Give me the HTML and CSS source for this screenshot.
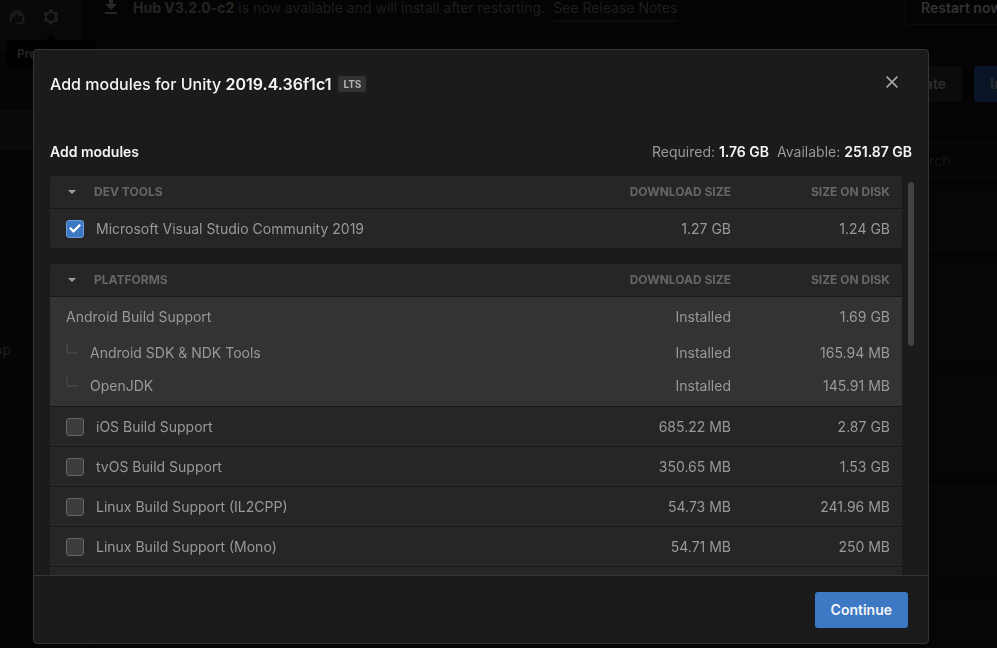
FILE: index.html
```html
<!DOCTYPE html>
<html lang="en">
<head>
<meta charset="utf-8">
<meta name="viewport" content="width=device-width, initial-scale=1">
<title>Unity Hub</title>
<link rel="stylesheet" href="styles.css">
</head>
<body>
<div class="app">
  <aside class="sidebar">
    <div class="sidebar-top">
      <button class="icon-button" type="button" aria-label="Support">
        <svg width="18" height="18" viewBox="0 0 24 24" fill="currentColor"><path d="M21 12.2C21 6.7 16.700 3 12 3S3 6.600 3 12.300C2.400 12.600 2 13.300 2 14v2c0 1.100.9 2 2 2h1v-6c0-3.900 3.100-7 7-7s7 3.100 7 7v7h-8v2h8c1.100 0 2-.9 2-2v-1.200c.6-.3 1-.9 1-1.600v-2.300c0-.8-.4-1.400-1-1.700z"/><circle cx="9" cy="13" r="1"/><circle cx="15" cy="13" r="1"/><path d="M18 11c-.5-2.900-3-5-6-5-3 0-6.200 2.500-6 6.500 2.500-1 4.300-3.200 4.900-5.800C12.200 9.300 14.900 11 18 11z"/></svg>
      </button>
      <button class="icon-button" type="button" aria-label="Preferences">
        <svg width="18" height="18" viewBox="0 0 18 18" fill="none" stroke="currentColor"><circle cx="9" cy="9" r="5" stroke-width="2.200"/><path stroke-width="3.400" d="M9 1.400v2.600M9 14v2.600M2.420 5.200l2.250 1.300M13.330 11.500l2.250 1.300M2.420 12.800l2.250-1.300M13.330 6.500l2.250-1.300"/></svg>
      </button>
      <div class="tooltip" role="tooltip">Preferences</div>
    </div>
    <nav class="sidebar-nav">
      <a class="nav-item active" href="#installs" aria-label="Installs"></a>
      <a class="nav-item nav-desktop" href="#desktop">op</a>
    </nav>
  </aside>
  <main class="main">
    <div class="banner">
      <svg class="banner-icon" width="12" height="14" viewBox="0 0 12 14" fill="currentColor"><path d="M4 0h4v4h4l-6 6-6-6h4zM0 12h12v2H0z"/></svg>
      <p class="banner-text"><strong>Hub V3.2.0-c2</strong> is now available and will install after restarting.</p>
      <a class="banner-link" href="#notes">See Release Notes</a>
      <button class="restart" type="button">Restart now</button>
    </div>
    <div class="toolbar">
      <button class="action" type="button">Locate</button>
      <button class="action action-primary" type="button">Install Editor</button>
    </div>
    <input class="search" type="search" aria-label="Search" placeholder="Search">
    <div class="cards">
      <div class="card card-first"></div>
      <div class="card"></div>
      <div class="card"></div>
      <div class="card"></div>
      <div class="card"></div>
    </div>
  </main>
</div>

<div class="overlay">
  <section class="dialog" role="dialog" aria-modal="true" aria-labelledby="dialog-title">
    <header class="dialog-header">
      <h1 class="dialog-title" id="dialog-title">Add modules for Unity <strong>2019.4.36f1c1</strong></h1>
      <span class="tag">LTS</span>
      <button class="close" type="button" aria-label="Close">
        <svg width="12" height="12" viewBox="0 0 12 12" fill="none" stroke="currentColor" stroke-width="1.600"><path d="M.6.6l10.800 10.800M11.400.6L.6 11.400"/></svg>
      </button>
    </header>
    <div class="summary">
      <h2 class="summary-title">Add modules</h2>
      <p class="space">Required: <strong>1.76 GB</strong></p>
      <p class="space">Available: <strong>251.87 GB</strong></p>
    </div>
    <div class="scroll-area">
      <div class="lists">
        <table class="modules">
          <thead>
            <tr>
              <th class="group" scope="col"><button class="toggle" type="button" aria-expanded="true"><span class="caret"></span>DEV TOOLS</button></th>
              <th class="size" scope="col">DOWNLOAD SIZE</th>
              <th class="disk" scope="col">SIZE ON DISK</th>
            </tr>
          </thead>
          <tbody>
            <tr class="row"><td><label class="option"><input class="check" type="checkbox" checked>Microsoft Visual Studio Community 2019</label></td><td>1.27 GB</td><td>1.24 GB</td></tr>
          </tbody>
        </table>
        <table class="modules">
          <thead>
            <tr>
              <th class="group" scope="col"><button class="toggle" type="button" aria-expanded="true"><span class="caret"></span>PLATFORMS</button></th>
              <th class="size" scope="col">DOWNLOAD SIZE</th>
              <th class="disk" scope="col">SIZE ON DISK</th>
            </tr>
          </thead>
          <tbody class="installed">
            <tr class="row"><td>Android Build Support</td><td>Installed</td><td>1.69 GB</td></tr>
            <tr class="child"><td><span class="branch"></span>Android SDK &amp; NDK Tools</td><td>Installed</td><td>165.94 MB</td></tr>
            <tr class="child child-last"><td><span class="branch"></span>OpenJDK</td><td>Installed</td><td>145.91 MB</td></tr>
          </tbody>
          <tbody>
            <tr class="row"><td><label class="option"><input class="check" type="checkbox">iOS Build Support</label></td><td>685.22 MB</td><td>2.87 GB</td></tr>
            <tr class="row"><td><label class="option"><input class="check" type="checkbox">tvOS Build Support</label></td><td>350.65 MB</td><td>1.53 GB</td></tr>
            <tr class="row"><td><label class="option"><input class="check" type="checkbox">Linux Build Support (IL2CPP)</label></td><td>54.73 MB</td><td>241.96 MB</td></tr>
            <tr class="row"><td><label class="option"><input class="check" type="checkbox">Linux Build Support (Mono)</label></td><td>54.71 MB</td><td>250 MB</td></tr>
            <tr class="row"><td></td><td></td><td></td></tr>
          </tbody>
        </table>
      </div>
      <div class="track"><div class="thumb"></div></div>
    </div>
    <footer class="dialog-footer">
      <button class="continue" type="button">Continue</button>
    </footer>
  </section>
</div>
</body>
</html>
```
FILE: styles.css
```css
* {
  box-sizing: border-box;
}

body {
  margin: 0;
  height: 100vh;
  overflow: hidden;
  background: #040404;
  color: #1e1e1e;
  font: 14px/20px Inter, "Liberation Sans", sans-serif;
}

h1, h2, p {
  margin: 0;
  font-size: inherit;
  font-weight: 400;
}

button, input {
  margin: 0;
  padding: 0;
  border: 0;
  background: none;
  color: inherit;
  font: inherit;
}

a {
  color: inherit;
  text-decoration: none;
}

/* Dimmed application behind the dialog */
.app {
  display: flex;
  height: 100vh;
  overflow: hidden;
}

.sidebar {
  flex: none;
  width: 82px;
  background: #050505;
  border-right: 1px solid #070707;
}

.sidebar-top {
  position: relative;
  display: flex;
  gap: 16px;
  height: 50px;
  padding: 8px;
  background: #080808;
}

.icon-button {
  width: 18px;
  height: 18px;
  color: #202020;
}

.icon-button svg {
  display: block;
}

.tooltip {
  position: absolute;
  top: 40px;
  left: 7px;
  width: 89px;
  padding: 4px 10px;
  border-radius: 4px;
  background: #010101;
  color: #262626;
  font-size: 12px;
  font-weight: 600;
}

.tooltip::before {
  content: "";
  position: absolute;
  top: -5px;
  left: 39px;
  border: 5px solid transparent;
  border-top: 0;
  border-bottom-color: #010101;
}

.sidebar-nav {
  display: flex;
  flex-direction: column;
  gap: 180px;
  padding-top: 60px;
}

.nav-item {
  height: 40px;
  line-height: 40px;
}

.nav-desktop {
  margin-left: -6px;
}

.active {
  background: #0a0a0a;
}

.main {
  flex: 1;
  min-width: 0;
}

.banner {
  display: flex;
  align-items: flex-start;
  height: 34px;
  padding-left: 23px;
  border-bottom: 1px solid #090909;
  white-space: nowrap;
}

.banner-icon {
  flex: none;
  margin-right: 16px;
  color: #262626;
}

.banner-text {
  padding-right: 8px;
  line-height: 16px;
}

.banner-text strong {
  color: #242424;
  font-weight: 700;
}

.banner-link {
  padding-bottom: 4px;
  border-bottom: 2px solid #0c0c0c;
  line-height: 16px;
}

.restart {
  flex: none;
  height: 25px;
  margin-left: auto;
  margin-right: -22px;
  padding: 0 16px 8px;
  border: 1px solid #0b0b0b;
  border-top: 0;
  border-radius: 0 0 4px 4px;
  color: #323232;
  font-weight: 600;
  line-height: 16px;
}

.toolbar {
  display: flex;
  justify-content: flex-end;
  gap: 12px;
  margin-right: -85px;
  padding-top: 32px;
}

.action {
  height: 36px;
  padding: 0 16px;
  border-radius: 4px;
  background: #0b0b0b;
  color: #2c2c2c;
  font-weight: 600;
}

.action-primary {
  width: 108px;
  overflow: hidden;
  background: #091527;
  text-align: left;
  white-space: nowrap;
}

.search {
  display: block;
  width: 240px;
  height: 36px;
  margin: 40px -80px 0 auto;
  padding: 0 16px 0 66px;
  border: 1px solid #0a0a0a;
  border-radius: 4px;
}

.search::placeholder {
  color: #161616;
}

.cards {
  display: flex;
  flex-direction: column;
  gap: 12px;
  padding: 8px 0 0 16px;
}

.card {
  flex: none;
  height: 98px;
  background: #060606;
}

.card-first {
  height: 66px;
}

/* Dialog */
.overlay {
  position: fixed;
  inset: 0;
  display: flex;
  padding: 49px 68px 4px 33px;
}

.dialog {
  display: flex;
  flex: 1;
  flex-direction: column;
  min-width: 0;
  overflow: hidden;
  border: 1px solid #353535;
  border-radius: 4px;
  background: #1b1b1b;
  color: #999;
}

.dialog strong {
  color: #f5f5f5;
  font-weight: 600;
}

.dialog-header {
  display: flex;
  align-items: center;
  padding: 20px 30px 0 16px;
}

.dialog-title {
  color: #f5f5f5;
  font-size: 16px;
  font-weight: 500;
  line-height: 28px;
}

.tag {
  margin-left: 7px;
  padding: 0 5px;
  border-radius: 2px;
  background: #333;
  color: #b4b4b4;
  font-size: 10px;
  font-weight: 700;
  line-height: 16px;
}

.close {
  height: 16px;
  margin-left: auto;
  color: #a8a8a8;
}

.close svg {
  display: block;
  margin-bottom: 4px;
}

.summary {
  display: flex;
  gap: 8px;
  padding: 44px 16px 14px;
}

.summary-title {
  flex: 1;
  color: #f5f5f5;
  font-weight: 600;
}

.scroll-area {
  display: flex;
  flex: 1;
  gap: 6px;
  min-height: 0;
  padding: 0 14px 0 16px;
}

.lists {
  display: flex;
  flex: 1;
  flex-direction: column;
  gap: 16px;
  min-width: 0;
  overflow: hidden;
}

.track {
  width: 6px;
  padding-top: 6px;
}

.thumb {
  height: 164px;
  border-radius: 3px;
  background: #434343;
}

.modules {
  flex: none;
  width: 100%;
  overflow: hidden;
  border-spacing: 0;
  border-radius: 4px;
  background: #262626;
  table-layout: fixed;
}

.modules th {
  height: 32px;
  padding: 0 12px 0 0;
  color: #666;
  font-size: 12px;
  font-weight: 700;
  line-height: 16px;
  text-align: right;
}

.modules .group {
  padding-left: 18px;
  text-align: left;
}

.size,
.disk {
  width: 159px;
}

.toggle {
  display: flex;
  align-items: center;
  gap: 18px;
}

.caret {
  border: 4px solid transparent;
  border-top-color: #a0a0a0;
  border-bottom: 0;
}

.modules td {
  padding: 0 12px 0 0;
  text-align: right;
}

.modules td:first-child {
  padding-left: 16px;
  text-align: left;
}

.row td {
  height: 40px;
  border-top: 1px solid #181818;
}

.installed {
  background: #333;
}

.child td {
  height: 33px;
}

.child-last td {
  height: 37px;
  padding-bottom: 4px;
}

.branch {
  display: inline-block;
  width: 12px;
  height: 10px;
  margin-right: 12px;
  border: solid #424242;
  border-width: 0 0 2px 2px;
  vertical-align: 4px;
}

.option {
  display: flex;
  align-items: center;
  gap: 12px;
}

.check {
  width: 18px;
  height: 18px;
  appearance: none;
  border: 1px solid #666;
  border-radius: 3px;
  background: #3d3d3d;
}

.check:checked {
  display: grid;
  place-items: center;
  border-color: #6c9cdb;
  background: #3d78c5;
}

.check:checked::before {
  content: "";
  width: 12px;
  height: 10px;
  background: #fff;
  clip-path: polygon(0 50%, 14% 34%, 37% 62%, 86% 4%, 100% 20%, 37% 96%);
}

.dialog-footer {
  display: flex;
  justify-content: flex-end;
  padding: 16px 20px 15px;
  border-top: 1px solid #353535;
}

.continue {
  height: 36px;
  padding: 0 16px;
  border-radius: 3px;
  background: #3d78c5;
  color: #f5f5f5;
  font-weight: 600;
}
```
